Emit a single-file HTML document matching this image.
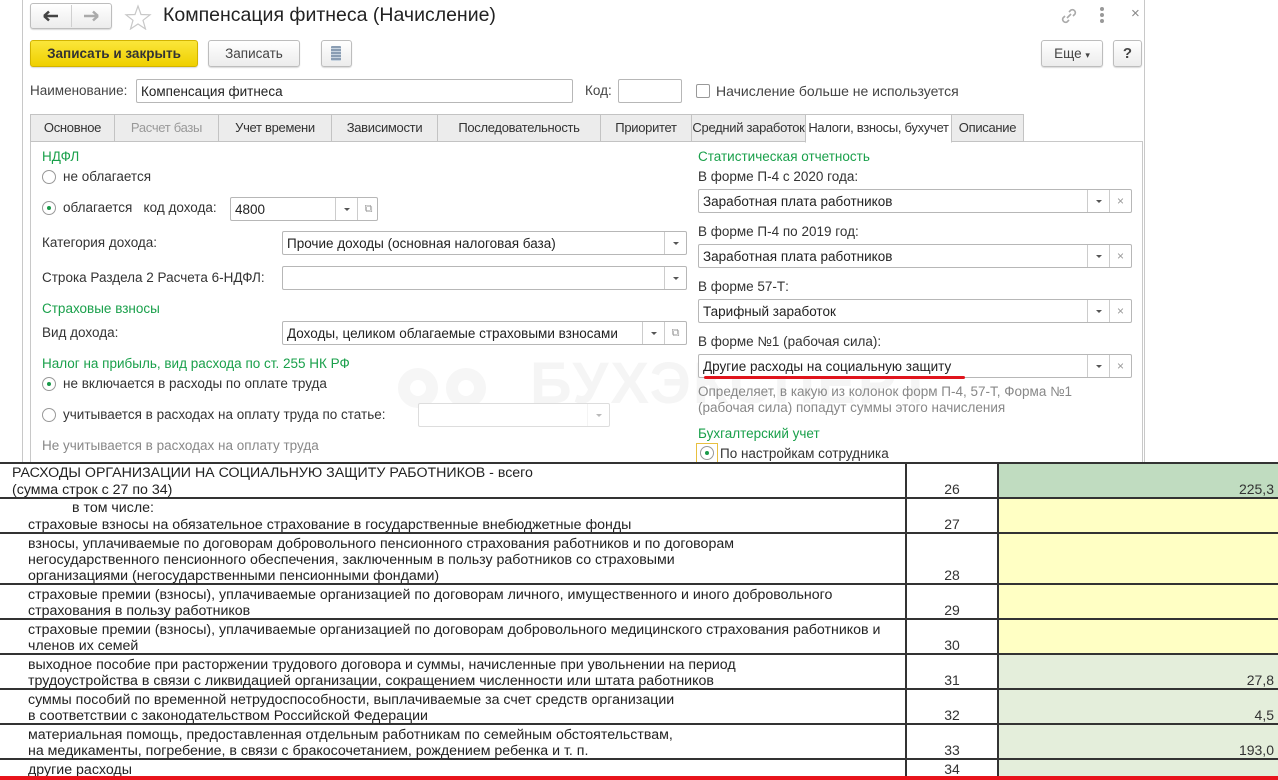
<!DOCTYPE html>
<html><head><meta charset="utf-8">
<style>
*{box-sizing:border-box;margin:0;padding:0}
body{width:1278px;height:780px;overflow:hidden;background:#fff;font-family:"Liberation Sans",Arial,sans-serif;font-size:13.5px;color:#333;position:relative}
.a{position:absolute;white-space:nowrap}
.btn{position:absolute;border:1px solid #bdbdbd;border-radius:3px;background:linear-gradient(#fff,#ececec);box-shadow:0 1px 1px rgba(0,0,0,.15);text-align:center;font-size:13.5px;color:#444;white-space:nowrap}
.inp{position:absolute;border:1px solid #b7b7b7;border-radius:2px;background:#fff;height:24px}
.inp span{position:absolute;left:4px;top:4px;color:#222;white-space:nowrap}
.dd{position:absolute;top:0;bottom:0;width:22px;border-left:1px solid #ccc}
.dd:after{content:"";position:absolute;left:8px;top:10px;border:3px solid transparent;border-top:3px solid #555}
.xb{position:absolute;top:0;bottom:0;width:22px;border-left:1px solid #ccc;color:#999;font-size:12px;text-align:center;line-height:22px}
.tab{position:absolute;top:114px;height:28px;border:1px solid #c3c3c3;background:#ececec;line-height:25px;text-align:center;color:#333;white-space:nowrap;font-size:13px;letter-spacing:-0.3px;overflow:hidden}
.g{color:#1aa04b}
.rad{position:absolute;width:14px;height:14px;border:1px solid #999;border-radius:50%;background:#fff}
.rad.on:after{content:"";position:absolute;left:4px;top:4px;width:4px;height:4px;border-radius:50%;background:#1a9a4a}
.row{position:absolute;left:0;width:1278px;border-top:2px solid #333}
.c1{position:absolute;left:0;width:905px;top:0;bottom:0;font-size:14.2px;color:#222}
.c2{position:absolute;left:905px;width:92px;top:0;bottom:0;border-left:2px solid #333;text-align:center;font-size:14px}
.c3{position:absolute;left:997px;right:0;top:0;bottom:0;border-left:2px solid #333;text-align:right;padding-right:4px;font-size:14px}
.ln{position:absolute;left:28px;white-space:nowrap}
.bn{position:absolute;bottom:1px;left:0;right:0}
</style></head><body>
<div class="a" style="left:22px;top:0;width:1px;height:462px;background:#c8c8c8"></div>
<div class="a" style="left:1144px;top:0;width:1px;height:462px;background:#c8c8c8"></div>
<div class="btn" style="left:30px;top:3px;width:82px;height:26px"></div>
<div class="a" style="left:71px;top:5px;width:1px;height:22px;background:#d0d0d0"></div>
<svg class="a" style="left:41px;top:9px" width="22" height="14"><path d="M3 7H17M3 7L8 2.5M3 7L8 11.5" stroke="#444" stroke-width="2.5" fill="none"/></svg>
<svg class="a" style="left:81px;top:9px" width="22" height="14"><path d="M3 7H17M17 7L12 2.5M17 7L12 11.5" stroke="#aaa" stroke-width="2.5" fill="none"/></svg>
<svg class="a" style="left:124px;top:4px" width="28" height="26"><path d="M14 2L17 10.5L26 10.8L19 16.3L21.5 25L14 20L6.5 25L9 16.3L2 10.8L11 10.5Z" fill="none" stroke="#c8c8c8" stroke-width="1.2"/></svg>
<div class="a" style="left:163px;top:4px;font-size:19.5px;color:#222">Компенсация фитнеса (Начисление)</div>
<svg class="a" style="left:1059px;top:6px" width="20" height="20"><path d="M8 12L12 8M6 10l-2 2a3 3 0 0 0 4 4l2-2M14 10l2-2a3 3 0 0 0-4-4l-2 2" stroke="#aaa" stroke-width="1.6" fill="none"/></svg>
<div class="a" style="left:1100px;top:7px;width:4px;height:4px;border-radius:2px;background:#999;box-shadow:0 6px 0 #999,0 12px 0 #999"></div>
<div class="a" style="left:1131px;top:5px;font-size:15px;color:#888">×</div>
<div class="btn" style="left:30px;top:40px;width:168px;height:27px;background:linear-gradient(#fbe63a,#efd000);border-color:#d2b400;font-weight:bold;color:#333;line-height:25px">Записать и закрыть</div>
<div class="btn" style="left:208px;top:40px;width:92px;height:27px;line-height:25px">Записать</div>
<div class="btn" style="left:321px;top:40px;width:31px;height:27px"></div>
<div class="a" style="left:331px;top:46px;width:10px;height:15px;background:repeating-linear-gradient(#8a9db3 0 2px,#c8d4e0 2px 3px);border-radius:1px"></div>
<div class="btn" style="left:1041px;top:40px;width:62px;height:27px;line-height:25px">Еще <span style="font-size:9px">▾</span></div>
<div class="btn" style="left:1113px;top:40px;width:29px;height:27px;line-height:25px;font-weight:bold;font-size:15px">?</div>
<div class="a" style="left:30px;top:83px;color:#444">Наименование:</div>
<div class="inp" style="left:136px;top:79px;width:437px"><span>Компенсация фитнеса</span></div>
<div class="a" style="left:585px;top:83px;color:#444">Код:</div>
<div class="inp" style="left:618px;top:79px;width:64px"></div>
<div class="a" style="left:696px;top:84px;width:14px;height:14px;border:1px solid #999;border-radius:2px"></div>
<div class="a" style="left:716px;top:83px;color:#444;font-size:14px">Начисление больше не используется</div>
<div class="a" style="left:30px;top:141px;width:1113px;height:330px;border:1px solid #c8c8c8"></div>
<div class="tab" style="left:30px;width:85px">Основное</div>
<div class="tab" style="left:114px;width:105px;color:#999">Расчет базы</div>
<div class="tab" style="left:218px;width:114px">Учет времени</div>
<div class="tab" style="left:331px;width:107px">Зависимости</div>
<div class="tab" style="left:437px;width:164px">Последовательность</div>
<div class="tab" style="left:600px;width:92px">Приоритет</div>
<div class="tab" style="left:691px;width:115px">Средний заработок</div>
<div class="tab" style="left:805px;width:147px;background:#fff;border-bottom-color:#fff;height:29px">Налоги, взносы, бухучет</div>
<div class="tab" style="left:951px;width:73px">Описание</div>
<div class="a" style="left:398px;top:368px;width:40px;height:40px;border:12px solid #f6f6f6;border-radius:50%"></div>
<div class="a" style="left:446px;top:368px;width:40px;height:40px;border:12px solid #f6f6f6;border-radius:50%"></div>
<div class="a" style="left:530px;top:350px;font-size:58px;font-weight:bold;color:#f5f5f5;letter-spacing:2px">БУХЭКСПЕРТ</div>
<div class="a g" style="left:42px;top:149px">НДФЛ</div>
<div class="rad" style="left:42px;top:170px"></div>
<div class="a" style="left:63px;top:169px">не облагается</div>
<div class="rad on" style="left:42px;top:201px"></div>
<div class="a" style="left:63px;top:200px">облагается &nbsp; код дохода:</div>
<div class="inp" style="left:230px;top:197px;width:148px"><span>4800</span><div class="dd" style="left:104px"></div><div class="xb" style="left:126px;font-size:11px">⧉</div></div>
<div class="a" style="left:42px;top:235px">Категория дохода:</div>
<div class="inp" style="left:282px;top:231px;width:405px"><span>Прочие доходы (основная налоговая база)</span><div class="dd" style="right:0"></div></div>
<div class="a" style="left:42px;top:270px">Строка Раздела 2 Расчета 6-НДФЛ:</div>
<div class="inp" style="left:282px;top:266px;width:405px"><div class="dd" style="right:0"></div></div>
<div class="a g" style="left:42px;top:301px">Страховые взносы</div>
<div class="a" style="left:42px;top:325px">Вид дохода:</div>
<div class="inp" style="left:282px;top:321px;width:405px"><span>Доходы, целиком облагаемые страховыми взносами</span><div class="dd" style="right:22px"></div><div class="xb" style="right:0;font-size:11px">⧉</div></div>
<div class="a g" style="left:42px;top:356px">Налог на прибыль, вид расхода по ст. 255 НК РФ</div>
<div class="rad on" style="left:42px;top:377px"></div>
<div class="a" style="left:63px;top:376px">не включается в расходы по оплате труда</div>
<div class="rad" style="left:42px;top:408px"></div>
<div class="a" style="left:63px;top:407px">учитывается в расходах на оплату труда по статье:</div>
<div class="inp" style="left:418px;top:403px;width:192px;border-color:#ddd"><div class="dd" style="right:0;border-color:#e4e4e4;opacity:.4"></div></div>
<div class="a" style="left:42px;top:438px;color:#888">Не учитывается в расходах на оплату труда</div>
<div class="a g" style="left:698px;top:149px">Статистическая отчетность</div>
<div class="a" style="left:698px;top:169px">В форме П-4 с 2020 года:</div>
<div class="inp" style="left:698px;top:189px;width:434px"><span>Заработная плата работников</span><div class="dd" style="right:22px"></div><div class="xb" style="right:0">×</div></div>
<div class="a" style="left:698px;top:224px">В форме П-4 по 2019 год:</div>
<div class="inp" style="left:698px;top:244px;width:434px"><span>Заработная плата работников</span><div class="dd" style="right:22px"></div><div class="xb" style="right:0">×</div></div>
<div class="a" style="left:698px;top:279px">В форме 57-Т:</div>
<div class="inp" style="left:698px;top:299px;width:434px"><span>Тарифный заработок</span><div class="dd" style="right:22px"></div><div class="xb" style="right:0">×</div></div>
<div class="a" style="left:698px;top:334px">В форме №1 (рабочая сила):</div>
<div class="inp" style="left:698px;top:354px;width:434px"><span>Другие расходы на социальную защиту</span><div class="dd" style="right:22px"></div><div class="xb" style="right:0">×</div></div>
<div class="a" style="left:704px;top:376px;width:261px;height:3px;background:#e0141c;border-radius:2px"></div>
<div class="a" style="left:698px;top:384px;color:#888">Определяет, в какую из колонок форм П-4, 57-Т, Форма №1</div>
<div class="a" style="left:698px;top:400px;color:#888">(рабочая сила) попадут суммы этого начисления</div>
<div class="a g" style="left:698px;top:426px">Бухгалтерский учет</div>
<div class="a" style="left:696px;top:443px;width:22px;height:22px;border:1px solid #e8c040"></div>
<div class="rad on" style="left:700px;top:446px"></div>
<div class="a" style="left:720px;top:446px">По настройкам сотрудника</div>
<div style="position:absolute;left:0;top:462px;width:1278px;height:318px;background:#fff"></div>
<div class="row" style="top:462px;height:36px"><div class="c1"><div class="ln" style="left:12px;top:1px">РАСХОДЫ ОРГАНИЗАЦИИ НА СОЦИАЛЬНУЮ ЗАЩИТУ РАБОТНИКОВ - всего</div><div class="ln" style="left:12px;top:18px">(сумма строк с 27 по 34)</div></div><div class="c2"><div class="bn">26</div></div><div class="c3" style="background:#c0dcc0"><div class="bn" style="right:4px">225,3</div></div></div>
<div class="row" style="top:497px;height:36px"><div class="c1"><div class="ln" style="left:72px;top:1px">в том числе:</div><div class="ln" style="top:18px">страховые взносы на обязательное страхование в государственные внебюджетные фонды</div></div><div class="c2"><div class="bn">27</div></div><div class="c3" style="background:#ffffc4"></div></div>
<div class="row" style="top:532px;height:52px"><div class="c1"><div class="ln" style="top:2px">взносы, уплачиваемые по договорам добровольного пенсионного страхования работников и по договорам</div><div class="ln" style="top:18px">негосударственного пенсионного обеспечения, заключенным в пользу работников со страховыми</div><div class="ln" style="top:34px">организациями (негосударственными пенсионными фондами)</div></div><div class="c2"><div class="bn">28</div></div><div class="c3" style="background:#ffffc4"></div></div>
<div class="row" style="top:583px;height:36px"><div class="c1"><div class="ln" style="top:2px">страховые премии (взносы), уплачиваемые организацией по договорам личного, имущественного и иного добровольного</div><div class="ln" style="top:18px">страхования в пользу работников</div></div><div class="c2"><div class="bn">29</div></div><div class="c3" style="background:#ffffc4"></div></div>
<div class="row" style="top:618px;height:36px"><div class="c1"><div class="ln" style="top:2px">страховые премии (взносы), уплачиваемые организацией по договорам добровольного медицинского страхования работников и</div><div class="ln" style="top:18px">членов их семей</div></div><div class="c2"><div class="bn">30</div></div><div class="c3" style="background:#ffffc4"></div></div>
<div class="row" style="top:653px;height:36px"><div class="c1"><div class="ln" style="top:2px">выходное пособие при расторжении трудового договора и суммы, начисленные при увольнении на период</div><div class="ln" style="top:18px">трудоустройства в связи с ликвидацией организации, сокращением численности или штата работников</div></div><div class="c2"><div class="bn">31</div></div><div class="c3" style="background:#e4eedb"><div class="bn" style="right:4px">27,8</div></div></div>
<div class="row" style="top:688px;height:36px"><div class="c1"><div class="ln" style="top:2px">суммы пособий по временной нетрудоспособности, выплачиваемые за счет средств организации</div><div class="ln" style="top:18px">в соответствии с законодательством Российской Федерации</div></div><div class="c2"><div class="bn">32</div></div><div class="c3" style="background:#e4eedb"><div class="bn" style="right:4px">4,5</div></div></div>
<div class="row" style="top:723px;height:36px"><div class="c1"><div class="ln" style="top:2px">материальная помощь, предоставленная отдельным работникам по семейным обстоятельствам,</div><div class="ln" style="top:18px">на медикаменты, погребение, в связи с бракосочетанием, рождением ребенка и т. п.</div></div><div class="c2"><div class="bn">33</div></div><div class="c3" style="background:#e4eedb"><div class="bn" style="right:4px">193,0</div></div></div>
<div class="row" style="top:758px;height:22px"><div class="c1"><div class="ln" style="top:2px">другие расходы</div></div><div class="c2"><div class="bn" style="bottom:3px">34</div></div><div class="c3" style="background:#e4eedb"></div></div>
<div class="a" style="left:0;top:776px;width:1278px;height:4px;background:#e8141c"></div>
</body></html>
